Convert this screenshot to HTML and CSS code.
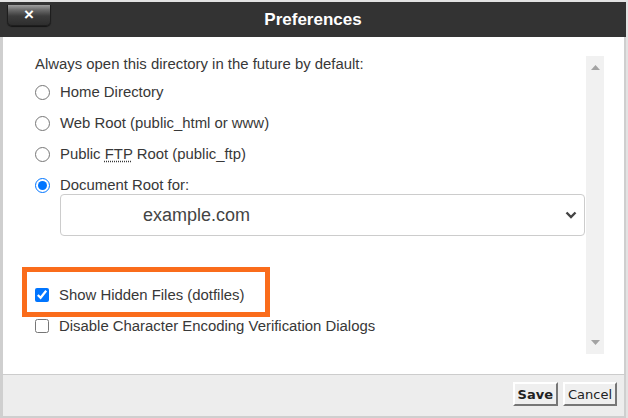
FILE: index.html
```html
<!DOCTYPE html>
<html>
<head>
<meta charset="utf-8">
<link rel="stylesheet" href="styles.css">
</head>
<body>
<div class="page">
  <div class="dialog">
    <div class="titlebar">
      <button class="close" type="button">×</button>
      <div class="title">Preferences</div>
      <div></div>
    </div>
    <div class="body">
      <div class="scrollarea">
        <div class="inner">
          <div class="hdr">Always open this directory in the future by default:</div>
          <label class="opt first"><input type="radio" name="dir"><span>Home Directory</span></label>
          <label class="opt"><input type="radio" name="dir"><span>Web Root (public_html or www)</span></label>
          <label class="opt"><input type="radio" name="dir"><span>Public <abbr title="File Transfer Protocol">FTP</abbr> Root (public_ftp)</span></label>
          <label class="opt"><input type="radio" name="dir" checked><span>Document Root for:</span></label>
          <div class="select">
            <span class="sel-text">example.com</span>
            <svg class="chev" width="12" height="8" viewBox="0 0 12 8"><polyline points="1.5,1.5 6,6 10.5,1.5" fill="none" stroke="#444" stroke-width="2.4"/></svg>
          </div>
          <div class="highlight">
            <label class="opt chk"><input type="checkbox" checked><span>Show Hidden Files (dotfiles)</span></label>
          </div>
          <label class="opt chk after"><input type="checkbox"><span>Disable Character Encoding Verification Dialogs</span></label>
        </div>
        <div class="scrollbar">
          <svg width="9" height="5" viewBox="0 0 9 5"><polygon points="0,5 9,5 4.5,0" fill="#a3a3a3"/></svg>
          <svg width="9" height="5" viewBox="0 0 9 5"><polygon points="0,0 9,0 4.5,5" fill="#a3a3a3"/></svg>
        </div>
      </div>
    </div>
    <div class="footer">
      <button class="btn save" type="button">Save</button>
      <button class="btn" type="button">Cancel</button>
    </div>
  </div>
</div>
</body>
</html>
```
FILE: styles.css
```css
html, body {
  margin: 0;
  padding: 0;
  background: #e3e3e3;
  overflow: hidden;
}
.page {
  padding-top: 2px;
  width: 626px;
}
.dialog {
  height: 416px;
  display: flex;
  flex-direction: column;
  font-family: "Liberation Sans", Arial, sans-serif;
}
.titlebar {
  height: 35px;
  background: #333333;
  display: grid;
  grid-template-columns: 1fr auto 1fr;
  align-items: start;
}
.close {
  justify-self: start;
  margin: 3px 0 0 7px;
  width: 44px;
  height: 21px;
  padding: 0;
  border: 1px solid #1e1e1e;
  border-top: none;
  border-radius: 0 0 5px 5px;
  background: linear-gradient(#a0a0a0 0%, #6a6a6a 25%, #3c3c3c 55%, #2e2e2e 100%);
  box-shadow: 0 1px 1px rgba(0,0,0,0.6);
  color: #fff;
  font-family: "Liberation Sans", Arial, sans-serif;
  font-weight: bold;
  font-size: 17px;
  line-height: 18px;
}
.title {
  color: #ffffff;
  font-weight: bold;
  font-size: 17px;
  line-height: 35px;
}
.body {
  height: 337px;
  box-sizing: border-box;
  background: #ffffff;
  border-left: 3px solid #cfcfcf;
  border-right: 2px solid #cfcfcf;
  padding: 19px 20px 20px 19px;
}
.scrollarea {
  height: 298px;
  display: flex;
}
.inner {
  flex: 1;
  display: flex;
  flex-direction: column;
  align-items: flex-start;
  color: #383838;
  font-size: 14.9px;
}
.hdr {
  margin-left: 13px;
  line-height: 17px;
}
.opt {
  display: flex;
  align-items: center;
  gap: 10px;
  height: 17px;
  margin: 14px 0 0 13px;
  line-height: 17px;
}
.opt.first {
  margin-top: 10.5px;
}
.opt input {
  margin: 0;
  width: 15px;
  height: 15px;
}
.opt.chk input {
  width: 14px;
  height: 14px;
}
abbr {
  text-decoration: underline dotted;
  text-underline-offset: 2px;
}
.select {
  margin: 0.5px 0 0 38px;
  width: 525px;
  height: 42px;
  box-sizing: border-box;
  border: 1px solid #cccccc;
  border-radius: 4px;
  display: flex;
  align-items: center;
  justify-content: space-between;
  padding: 0 7px 0 82px;
}
.sel-text {
  font-size: 18px;
  color: #444444;
}
.highlight {
  margin-top: 31px;
  border: 5px solid #fa6c1b;
  padding: 14.5px 21px 8.5px 8px;
}
.highlight .opt {
  margin: 0;
}
.opt.after {
  margin-top: 0.5px;
}
.scrollbar {
  width: 18px;
  background: #f1f1f1;
  display: flex;
  flex-direction: column;
  justify-content: space-between;
  align-items: center;
  padding: 9px 0 9px;
  box-sizing: border-box;
}
.footer {
  height: 40px;
  background: #ededed;
  border-top: 1px solid #cccccc;
  border-bottom: 2px solid #cfcfcf;
  border-left: 3px solid #cfcfcf;
  border-right: 2px solid #cfcfcf;
  display: flex;
  justify-content: flex-end;
  align-items: flex-start;
  gap: 5px;
  padding: 7px 7px 0 0;
}
.btn {
  height: 24px;
  padding: 0 3px;
  background: #efefef;
  border: 2px solid;
  border-color: #ffffff #767676 #767676 #ffffff;
  font-family: "DejaVu Sans", Verdana, sans-serif;
  font-size: 13px;
  color: #222222;
}
.btn.save {
  font-weight: bold;
}
```
